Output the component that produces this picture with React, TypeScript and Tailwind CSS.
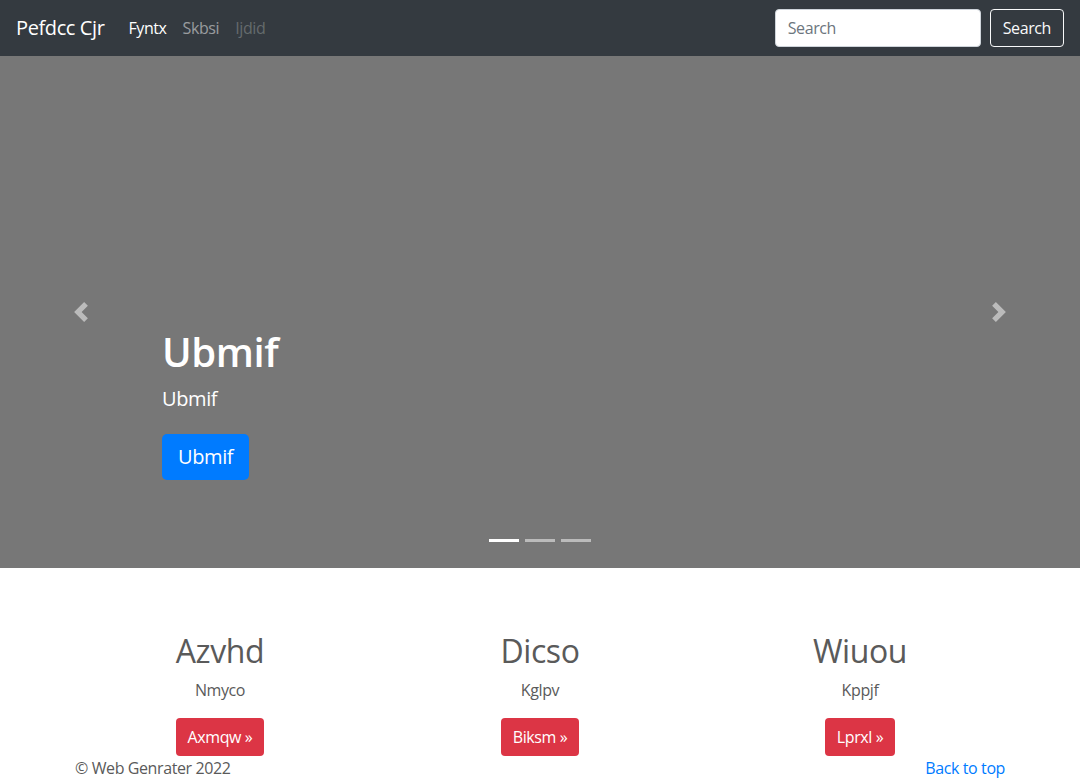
export default function App() {
  const font = "font-['Open_Sans','Noto_Sans',sans-serif]";
  return (
    <div className={`min-h-[780px] bg-white text-[#5a5a5a] ${font} text-base leading-6 tracking-[-0.025em]`}>
      <nav className="h-14 bg-[#343a40] flex items-center px-4">
        <a className="text-white text-xl mr-4 leading-[30px]">Pefdcc Cjr</a>
        <ul className="flex">
          <li className="px-2 text-white">Fyntx</li>
          <li className="px-2 text-white/50">Skbsi</li>
          <li className="px-2 text-white/25">Ijdid</li>
        </ul>
        <form className="ml-auto flex items-center">
          <input
            placeholder="Search"
            className="w-[206px] h-[38px] rounded bg-white border border-[#ced4da] px-3 text-base text-[#495057] placeholder:text-[#6c757d] mr-[9px] outline-none tracking-[-0.025em]"
          />
          <button type="button" className="h-[38px] px-3 border border-[#f8f9fa] rounded text-[#f8f9fa] text-base">
            Search
          </button>
        </form>
      </nav>

      <div className="relative h-[512px] bg-[#777] mb-16">
        <div className="absolute left-0 top-0 bottom-0 w-[15%] flex items-center justify-center opacity-50">
          <svg width="20" height="20" viewBox="0 0 8 8" fill="#fff">
            <path d="M5.25 0l-4 4 4 4 1.5-1.5L4.25 4l2.5-2.5L5.25 0z" />
          </svg>
        </div>
        <div className="absolute right-0 top-0 bottom-0 w-[15%] flex items-center justify-center opacity-50">
          <svg width="20" height="20" viewBox="0 0 8 8" fill="#fff">
            <path d="M2.75 0l-1.5 1.5L3.75 4l-2.5 2.5L2.75 8l4-4-4-4z" />
          </svg>
        </div>
        <div className="absolute left-[15%] right-[15%] bottom-[88px] text-white">
          <h1 className="text-[40px] font-semibold leading-[48px] mb-2">Ubmif</h1>
          <p className="text-xl leading-[30px] mb-[20px]">Ubmif</p>
          <a className="inline-block bg-[#007bff] text-white text-xl leading-[30px] px-4 py-2 rounded-[5px]">Ubmif</a>
        </div>
        <div className="absolute left-0 right-0 bottom-[26px] flex justify-center gap-[6px]">
          <span className="w-[30px] h-[3px] bg-white" />
          <span className="w-[30px] h-[3px] bg-white/50" />
          <span className="w-[30px] h-[3px] bg-white/50" />
        </div>
      </div>

      <div className="w-[960px] mx-auto grid grid-cols-3">
        {[
          ["Azvhd", "Nmyco", "Axmqw »"],
          ["Dicso", "Kglpv", "Biksm »"],
          ["Wiuou", "Kppjf", "Lprxl »"],
        ].map(([h, p, b]) => (
          <div key={h} className="px-[15px] text-center">
            <h2 className="text-[32px] font-medium leading-[38px] mb-2">{h}</h2>
            <p className="mb-4">{p}</p>
            <p>
              <a className="inline-block bg-[#dc3545] text-white px-3 py-[7px] leading-6 rounded">{b}</a>
            </p>
          </div>
        ))}
      </div>

      <footer className="w-[960px] mx-auto px-[15px] flex justify-between">
        <p>© Web Genrater 2022</p>
        <p>
          <a className="text-[#007bff]">Back to top</a>
        </p>
      </footer>
    </div>
  );
}
